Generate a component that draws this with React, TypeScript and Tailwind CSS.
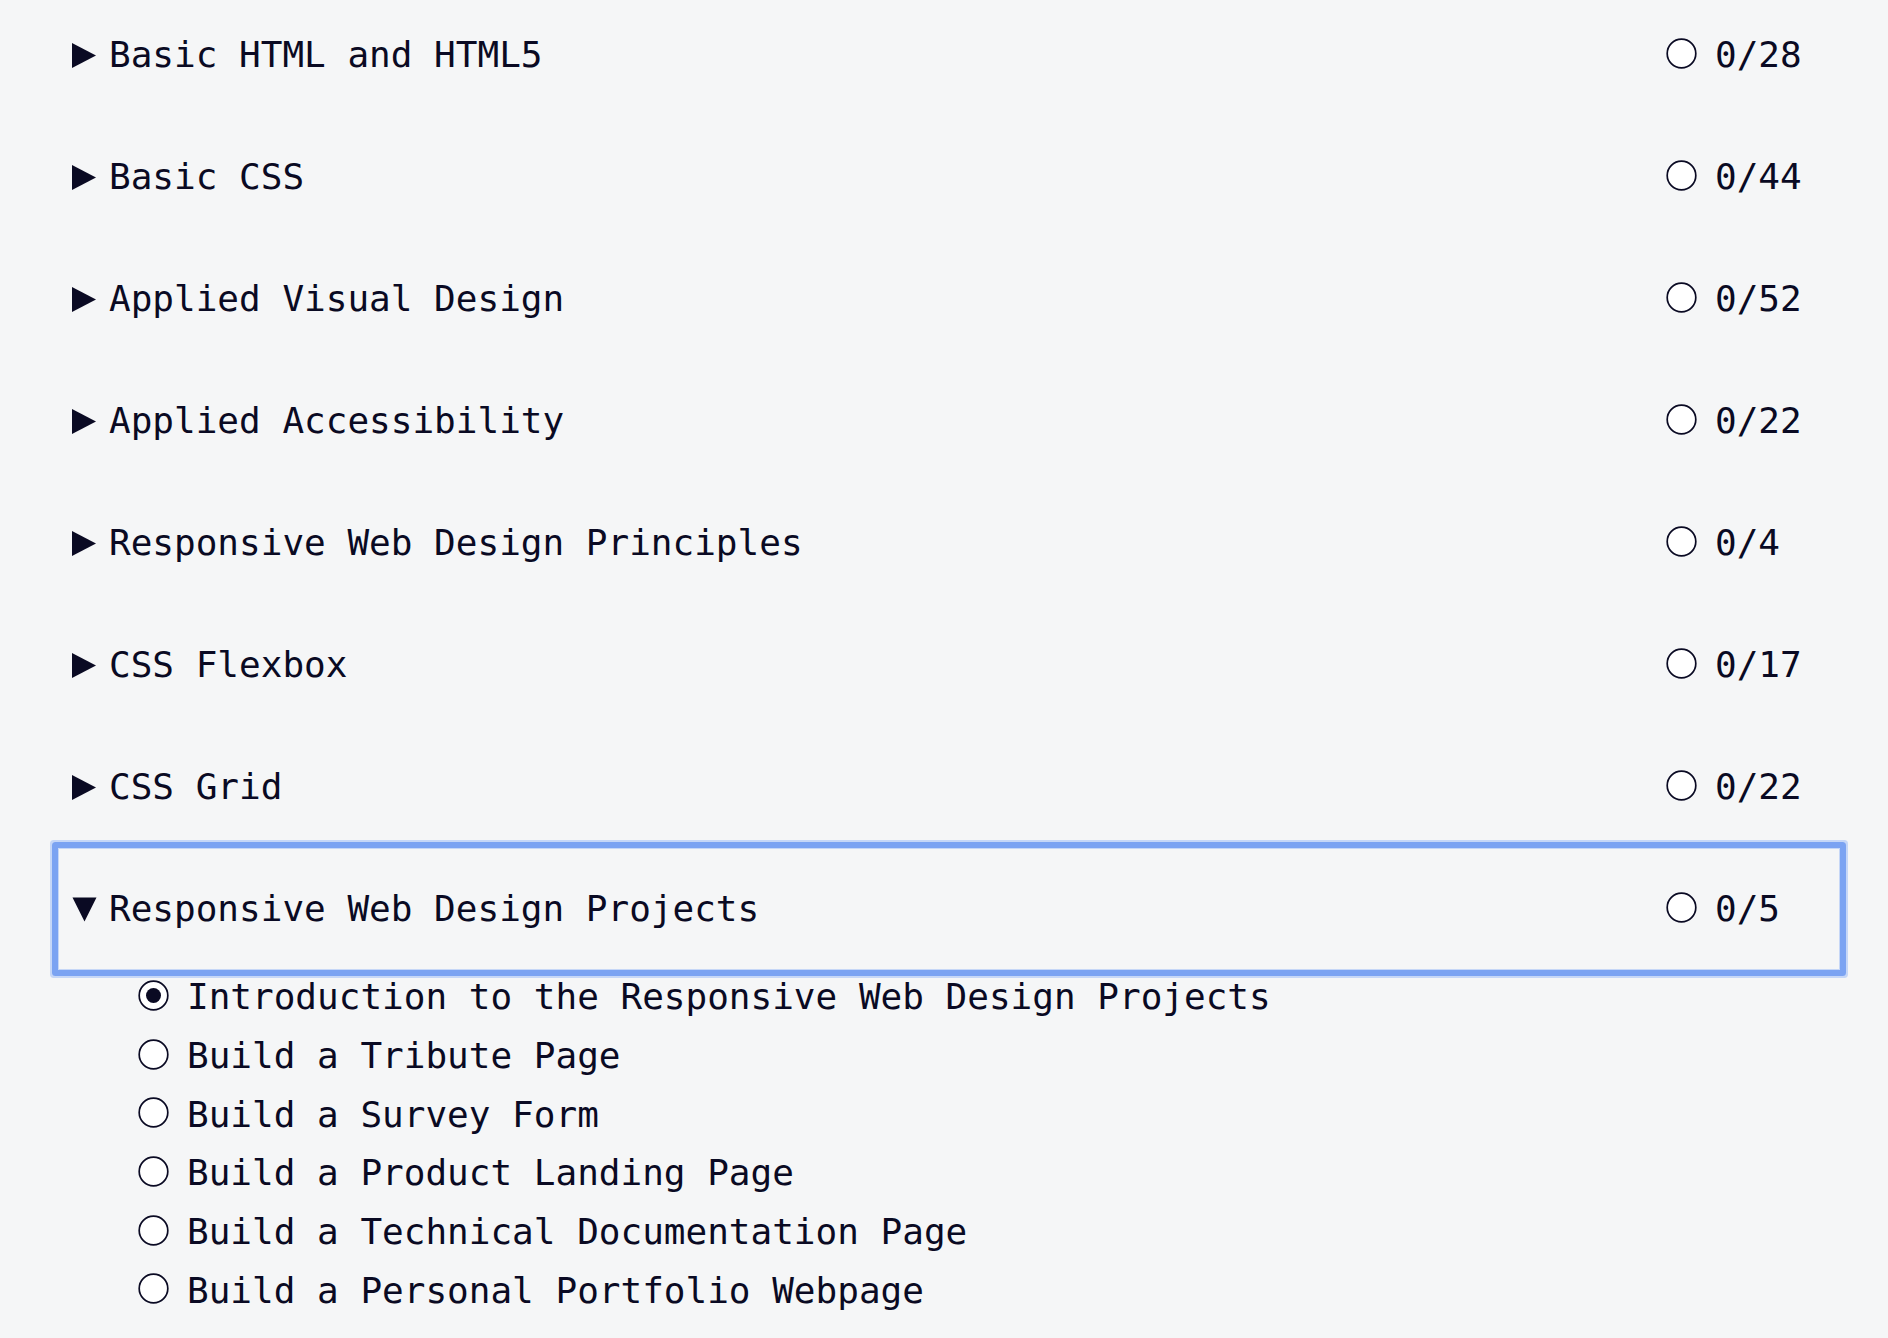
import React from 'react';

const blocks = [
  { title: 'Basic HTML and HTML5', count: '0/28' },
  { title: 'Basic CSS', count: '0/44' },
  { title: 'Applied Visual Design', count: '0/52' },
  { title: 'Applied Accessibility', count: '0/22' },
  { title: 'Responsive Web Design Principles', count: '0/4' },
  { title: 'CSS Flexbox', count: '0/17' },
  { title: 'CSS Grid', count: '0/22' },
  { title: 'Responsive Web Design Projects', count: '0/5', open: true },
];

const projects = [
  'Introduction to the Responsive Web Design Projects',
  'Build a Tribute Page',
  'Build a Survey Form',
  'Build a Product Landing Page',
  'Build a Technical Documentation Page',
  'Build a Personal Portfolio Webpage',
];

const Radio = ({ checked = false }: { checked?: boolean }) => (
  <svg width="31" height="31" viewBox="0 0 31 31" className="shrink-0 -translate-y-[2px]">
    <circle cx="15.5" cy="15.5" r="14.3" fill="#ffffff" stroke="#0a0a23" strokeWidth="1.7" />
    {checked && <circle cx="15.5" cy="15.5" r="7.5" fill="#0a0a23" />}
  </svg>
);

const Caret = ({ open }: { open?: boolean }) =>
  open ? (
    <svg width="25" height="25" viewBox="0 0 25 25" className="shrink-0 mr-[12px]">
      <polygon points="0.5,0.5 24.5,0.5 12.5,24.5" fill="#0a0a23" />
    </svg>
  ) : (
    <svg width="25" height="25" viewBox="0 0 25 25" className="shrink-0 mr-[12px]">
      <polygon points="0,0 24,12.5 0,25" fill="#0a0a23" />
    </svg>
  );

export default function App() {
  return (
    <div className="min-h-screen overflow-hidden bg-[#f5f6f7] font-['DejaVu_Sans_Mono','Liberation_Mono',monospace] text-[36px] text-[#0a0a23]">
      <ul className="-mt-[6px] pl-[58px] pr-[48px]">
        {blocks.map((b) => (
          <li key={b.title}>
            <button
              className={`flex h-[122px] w-full items-center justify-between pl-[14px] pr-[38px] text-left ${
                b.open
                  ? 'rounded-[1px] shadow-[0_0_0_6px_#7ba3f2,0_0_0_8px_#c6d7f7,inset_0_0_0_1px_#c6d7f7]'
                  : ''
              }`}
            >
              <span className="flex items-center">
                <Caret open={b.open} />
                <span className="whitespace-pre">{b.title}</span>
              </span>
              <span className="flex items-center">
                <Radio />
                <span className="ml-[18px] w-[87px] whitespace-pre">{b.count}</span>
              </span>
            </button>
            {b.open && (
              <ul className="-mt-[2px] pl-[80px]">
                {projects.map((p, i) => (
                  <li key={p} className="flex h-[58.7px] items-center">
                    <Radio checked={i === 0} />
                    <span className="ml-[18px] whitespace-pre">{p}</span>
                  </li>
                ))}
              </ul>
            )}
          </li>
        ))}
      </ul>
    </div>
  );
}
